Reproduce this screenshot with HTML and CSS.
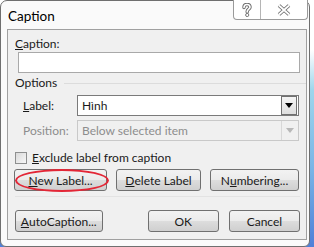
FILE: index.html
```html
<!DOCTYPE html>
<html lang="en">
<head>
    <meta charset="UTF-8">
    <title>Caption</title>
    <link rel="stylesheet" href="styles.css">
</head>
<body>
    <div class="window">
        <div class="titlebar">
            <span class="title">Caption</span>
            <div class="caption-btns">
                <span class="cbtn">
                    <svg width="12" height="14" viewBox="0 0 12 14">
                        <path d="M3 4.5 C3 2 4.5 1.5 6 1.5 C7.5 1.5 9 2.3 9 4.2 C9 6 6.2 6.4 6.2 8.4 L6.2 9" fill="none" stroke="#6b6b6b" stroke-width="3.4" stroke-linecap="round"/>
                        <path d="M3 4.5 C3 2 4.5 1.5 6 1.5 C7.5 1.5 9 2.3 9 4.2 C9 6 6.2 6.4 6.2 8.4 L6.2 9" fill="none" stroke="#fff" stroke-width="1.6" stroke-linecap="round"/>
                        <circle cx="6.2" cy="12" r="1.6" fill="#fff" stroke="#6b6b6b" stroke-width="0.9"/>
                    </svg>
                </span>
                <span class="cbtn">
                    <svg width="16" height="12" viewBox="0 0 16 12">
                        <path d="M3 1.5 L13 10.5 M13 1.5 L3 10.5" stroke="#6b6b6b" stroke-width="3.6"/>
                        <path d="M3 1.5 L13 10.5 M13 1.5 L3 10.5" stroke="#fff" stroke-width="1.8"/>
                    </svg>
                </span>
            </div>
        </div>
        <div class="client">
            <div class="field-label"><u>C</u>aption:</div>
            <div class="textbox"></div>

            <div class="group-head"><span>Options</span><span class="rule"></span></div>

            <div class="row">
                <span class="row-label"><u>L</u>abel:</span>
                <div class="select">
                    <span>Hình</span>
                    <span class="arrow"><svg width="8" height="5" viewBox="0 0 8 5"><path d="M0 0 L8 0 L4 5 Z" fill="#000"/></svg></span>
                </div>
            </div>
            <div class="row disabled">
                <span class="row-label">Position:</span>
                <div class="select">
                    <span>Below selected item</span>
                    <span class="arrow"><svg width="8" height="5" viewBox="0 0 8 5"><path d="M0 0 L8 0 L4 5 Z" fill="#b8b8b8"/></svg></span>
                </div>
            </div>

            <div class="check-row">
                <span class="checkbox"></span>
                <span><u>E</u>xclude label from caption</span>
            </div>

            <div class="btn-row">
                <div class="btn w-new"><u>N</u>ew Label...<span class="circle"></span></div>
                <div class="btn w-del"><u>D</u>elete Label</div>
                <div class="btn w-num">N<u>u</u>mbering...</div>
            </div>

            <div class="sep"></div>

            <div class="btn-row bottom">
                <div class="btn w-auto"><u>A</u>utoCaption...</div>
                <div class="spacer"></div>
                <div class="btn w-ok">OK</div>
                <div class="btn w-cancel">Cancel</div>
            </div>
        </div>
    </div>
</body>
</html>
```

FILE: styles.css
```css
* {
    box-sizing: border-box;
    margin: 0;
    padding: 0;
}
body {
    width: 314px;
    height: 247px;
    overflow: hidden;
    font-family: Lato, "Noto Sans", sans-serif;
    font-size: 12px;
    color: #1a1a1a;
    background: linear-gradient(to bottom, #ffffff 0px, #ffffff 50px, #9ed6ec 90px, #79b4e6 170px, #4f7fd8 247px);
}
.window {
    width: 310px;
    height: 247px;
    background-color: #fafafa;
    border: 1px solid #6f6f6f;
    border-radius: 7px 7px 6px 6px;
    display: flex;
    flex-direction: column;
}
.titlebar {
    height: 28px;
    display: flex;
    justify-content: space-between;
    align-items: flex-start;
    padding-left: 7px;
}
.title {
    font-size: 13.5px;
    line-height: 14px;
    margin-top: 8px;
    color: #000;
}
.caption-btns {
    display: flex;
    margin-top: -1px;
    margin-right: 1px;
    border: 1px solid #9a9a9a;
    border-top: none;
    border-radius: 0 0 4px 4px;
    height: 20px;
    background-color: #fff;
}
.cbtn {
    height: 19px;
    display: flex;
    align-items: center;
    justify-content: center;
}
.cbtn:first-child {
    width: 27px;
    border-right: 1px solid #b5b5b5;
}
.cbtn:last-child {
    width: 46px;
}
.client {
    margin-left: 6px;
    width: 300px;
    height: 211px;
    background-color: #f0f0f0;
    border: 1px solid #a0a0a0;
    padding: 7px 6px 0 7px;
    display: flex;
    flex-direction: column;
}
.field-label {
    line-height: 14px;
}
.textbox {
    margin: 1px 0 0 3px;
    height: 21px;
    background-color: #fff;
    border: 1px solid #a9a9a9;
    width: 282px;
}
.group-head {
    display: flex;
    align-items: center;
    margin-top: 3px;
    line-height: 14px;
}
.rule {
    flex: 1;
    height: 1px;
    background-color: #dcdcdc;
    margin-left: 7px;
    margin-right: -6px;
}
.row {
    display: flex;
    align-items: center;
    margin-top: 5px;
    padding-left: 8px;
}
.row + .row {
    margin-top: 4px;
}
.row-label {
    width: 54px;
}
.select {
    width: 222px;
    height: 21px;
    background-color: #fff;
    border: 1px solid #7a7a7a;
    display: flex;
    justify-content: space-between;
    align-items: center;
    padding-left: 4px;
}
.arrow {
    width: 16px;
    height: 19px;
    margin-right: 1px;
    background: linear-gradient(to bottom, #f4f4f4, #dedede);
    border: 1px solid #707070;
    display: flex;
    align-items: center;
    justify-content: center;
}
.disabled {
    color: #8d8d8d;
}
.disabled .select {
    background-color: #f0f0f0;
    border-color: #c9c9c9;
}
.disabled .arrow {
    background: #f0f0f0;
    border: none;
    border-left: 1px solid #d8d8d8;
}
.check-row {
    display: flex;
    align-items: center;
    gap: 5px;
    margin-top: 10px;
    line-height: 13px;
}
.checkbox {
    width: 12px;
    height: 12px;
    border: 1px solid #8e8f8f;
    background: linear-gradient(to bottom right, #d9d9d9, #f7f7f7);
}
.btn-row {
    display: flex;
    gap: 9px;
    margin-top: 5px;
    margin-left: -1px;
}
.btn {
    position: relative;
    height: 22px;
    border: 1px solid #707070;
    border-radius: 3px;
    background: linear-gradient(to bottom, #f2f2f2 0%, #ebebeb 50%, #dddddd 51%, #cfcfcf 100%);
    display: flex;
    align-items: center;
    justify-content: center;
}
.w-new { width: 93px; }
.w-del { width: 85px; }
.w-num { width: 89px; }
.w-auto { width: 91px; }
.w-ok { width: 74px; }
.w-cancel { width: 74px; }
.spacer {
    width: 26px;
}
.btn-row.bottom {
    margin-top: 13px;
    margin-left: 0;
    gap: 10px;
}
.sep {
    height: 1px;
    background-color: #e3e3e3;
    margin-top: 5px;
}
.circle {
    position: absolute;
    left: 0px;
    top: -1px;
    width: 94px;
    height: 23px;
    border: 2px solid #e32636;
    border-radius: 50%;
}
```
